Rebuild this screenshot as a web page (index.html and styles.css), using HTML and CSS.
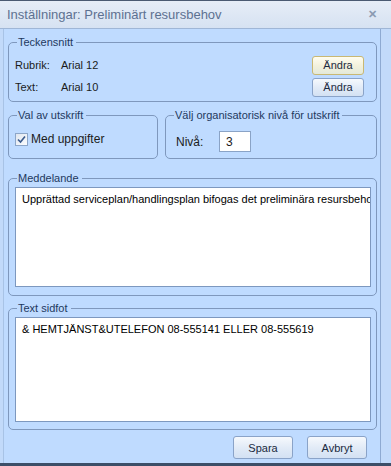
FILE: index.html
```html
<!DOCTYPE html>
<html lang="sv">
<head>
    <meta charset="UTF-8">
    <title>Inställningar: Preliminärt resursbehov</title>
    <link rel="stylesheet" href="styles.css">
</head>
<body>
    <div class="window">
        <div class="titlebar">
            <span class="title">Inställningar: Preliminärt resursbehov</span>
            <span class="close">&#x2715;</span>
        </div>
        <div class="content">
            <fieldset class="group font-group">
                <legend>Teckensnitt</legend>
                <div class="font-row">
                    <span class="label">Rubrik:</span>
                    <span class="value">Arial 12</span>
                    <button class="btn btn-small btn-focus">Ändra</button>
                </div>
                <div class="font-row">
                    <span class="label">Text:</span>
                    <span class="value">Arial 10</span>
                    <button class="btn btn-small">Ändra</button>
                </div>
            </fieldset>

            <div class="split">
                <fieldset class="group print-group">
                    <legend>Val av utskrift</legend>
                    <label class="check">
                        <span class="box">
                            <svg width="9" height="9" viewBox="0 0 9 9"><path d="M1 4.5 L3.5 7 L8 1.5" fill="none" stroke="#3a5a8c" stroke-width="1.6"/></svg>
                        </span>
                        Med uppgifter
                    </label>
                </fieldset>
                <fieldset class="group level-group">
                    <legend>Välj organisatorisk nivå för utskrift</legend>
                    <div class="level-row">
                        <span class="label">Nivå:</span>
                        <div class="input">3</div>
                    </div>
                </fieldset>
            </div>

            <fieldset class="group text-group message-group">
                <legend>Meddelande</legend>
                <div class="textbox">Upprättad serviceplan/handlingsplan bifogas det preliminära resursbehov</div>
            </fieldset>

            <fieldset class="group text-group footer-group">
                <legend>Text sidfot</legend>
                <div class="textbox">&amp; HEMTJÄNST&amp;UTELEFON 08-555141 ELLER 08-555619</div>
            </fieldset>

            <div class="actions">
                <button class="btn btn-large">Spara</button>
                <button class="btn btn-large">Avbryt</button>
            </div>
        </div>
    </div>
</body>
</html>
```

FILE: styles.css
```css
html, body {
    margin: 0;
    padding: 0;
}
body {
    width: 391px;
    height: 466px;
    overflow: hidden;
    font-family: "Liberation Sans", Arial, sans-serif;
    font-size: 11px;
    color: #1b1b1b;
    background: #bfdbff;
}
.window {
    box-sizing: border-box;
    height: 466px;
    border-bottom: 3px solid #3c4e68;
    background: #c2dafa;
}
.titlebar {
    box-sizing: border-box;
    height: 29px;
    display: flex;
    align-items: center;
    justify-content: space-between;
    padding: 0 14px 0 7px;
    background: linear-gradient(#e6edf7, #d6e2f2);
    border-top: 1px solid #4a5a72;
    border-bottom: 1px solid #9fb6d6;
}
.title {
    font-size: 13px;
    color: #5d7191;
}
.close {
    font-size: 11px;
    font-weight: bold;
    color: #8a9ab2;
}
.content {
    box-sizing: border-box;
    height: 434px;
    margin: 0 10px 0 3px;
    padding: 7px 3px 0 4px;
    background: #bfdbff;
    border-left: 1px solid #a8c3e6;
    border-right: 1px solid #8eaad2;
}
.group {
    box-sizing: border-box;
    margin: 0;
    border: 1px solid #7f98bd;
    border-radius: 5px;
    padding: 0 5px 6px 6px;
    min-width: 0;
}
.group legend {
    padding: 0 3px 0 1px;
    margin-left: 2px;
    color: #1e395e;
    font-size: 11px;
}
.font-group {
    height: 66px;
    padding-top: 6px;
}
.font-row {
    display: flex;
    align-items: center;
    height: 22px;
}
.font-row .label {
    width: 46px;
}
.font-row .value {
    flex: 1;
}
.btn {
    font-family: "Liberation Sans", Arial, sans-serif;
    font-size: 11px;
    color: #1b2a40;
    background: linear-gradient(#f6f9fd, #e2ebf7 50%, #d3e1f3);
    border: 1px solid #8aa3c8;
    border-radius: 3px;
    padding: 0;
}
.btn-small {
    width: 52px;
    height: 19px;
    margin-right: 7px;
}
.btn-focus {
    border-color: #c9b873;
    background: linear-gradient(#fffdf0, #f3f1dc 50%, #e3e9da);
}
.split {
    display: flex;
    gap: 7px;
    margin-top: 7px;
}
.print-group {
    width: 150px;
    height: 50px;
}
.level-group {
    flex: 1;
    height: 50px;
}
.check {
    display: flex;
    align-items: center;
    gap: 3px;
    margin-top: 11px;
    font-size: 12px;
}
.box {
    box-sizing: border-box;
    width: 13px;
    height: 13px;
    border: 1px solid #8da6c8;
    background: linear-gradient(135deg, #dfe6ef, #fbfcfe);
    display: flex;
    align-items: center;
    justify-content: center;
}
.level-row {
    display: flex;
    align-items: center;
    margin-top: 10px;
    padding-left: 4px;
}
.level-row .label {
    width: 43px;
    font-size: 12px;
}
.input {
    box-sizing: border-box;
    width: 32px;
    height: 21px;
    background: #fff;
    border: 1px solid #8aa3c6;
    padding: 3px 0 0 6px;
    font-size: 12px;
}
.text-group {
    padding-top: 3px;
}
.message-group {
    margin-top: 13px;
    height: 124px;
}
.footer-group {
    margin-top: 6px;
    height: 128px;
}
.textbox {
    box-sizing: border-box;
    height: 100px;
    background: #fff;
    border: 1px solid #7d98bf;
    padding: 5px 6px;
    white-space: nowrap;
    overflow: hidden;
    font-size: 11px;
    color: #000;
}
.footer-group .textbox {
    height: 105px;
}
.actions {
    display: flex;
    justify-content: flex-end;
    gap: 14px;
    margin-top: 6px;
    padding-right: 10px;
}
.btn-large {
    width: 60px;
    height: 23px;
}
```
